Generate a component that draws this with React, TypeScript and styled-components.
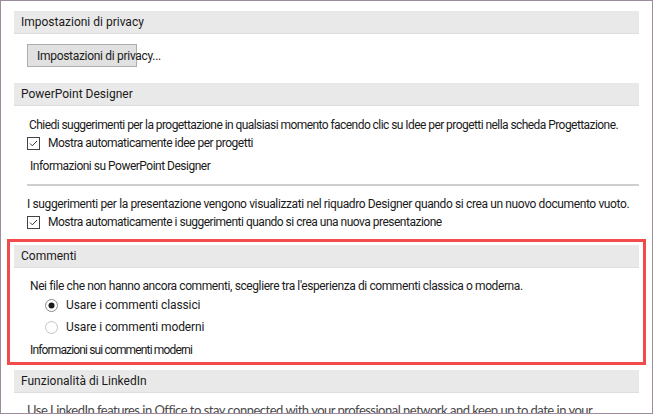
import React from 'react';
import styled, { createGlobalStyle } from 'styled-components';

const GlobalStyle = createGlobalStyle`
  html, body {
    margin: 0;
    padding: 0;
    background: #ffffff;
  }
  body {
    font-family: Roboto, "Liberation Sans", Arial, sans-serif;
    font-size: 12px;
    color: #1a1a1a;
  }
`;

const Frame = styled.div`
  width: 653px;
  height: 414px;
  box-sizing: border-box;
  border: 1px solid #9f8b9f;
  padding: 10px 13px 0 13px;
  overflow: hidden;
  display: flex;
  flex-direction: column;
`;

const SectionHeader = styled.div<{ $gap?: number }>`
  height: 22px;
  margin-top: ${({ $gap }) => ($gap ? `${$gap}px` : '0')};
  border-bottom: 1px solid #dedede;
  background: #e9e9e9;
  padding-left: 7px;
  display: flex;
  align-items: center;
  flex-shrink: 0;
`;

const PlainButton = styled.button`
  width: 110px;
  height: 23px;
  margin: 10px 0 0 13px;
  padding: 0 0 0 9px;
  box-sizing: border-box;
  border: 1px solid #adadad;
  background: #e1e1e1;
  font: inherit;
  letter-spacing: -0.3px;
  color: #1a1a1a;
  text-align: left;
  white-space: nowrap;
  overflow: visible;
  flex-shrink: 0;
`;

const TextRow = styled.div<{ $gap?: number; $indent?: number; $height?: number; $track?: number }>`
  height: ${({ $height }) => ($height ? `${$height}px` : '18px')};
  margin-top: ${({ $gap }) => ($gap ? `${$gap}px` : '0')};
  padding-left: ${({ $indent }) => ($indent ? `${$indent}px` : '15px')};
  letter-spacing: ${({ $track }) => ($track !== undefined ? $track : -0.5)}px;
  display: flex;
  align-items: center;
  white-space: nowrap;
  flex-shrink: 0;
`;

const OptionRow = styled.label<{ $indent: number; $height?: number; $track?: number }>`
  height: ${({ $height }) => ($height ? `${$height}px` : '18px')};
  padding-left: ${({ $indent }) => $indent}px;
  letter-spacing: ${({ $track }) => ($track !== undefined ? $track : -0.5)}px;
  display: flex;
  align-items: center;
  gap: 8px;
  white-space: nowrap;
  flex-shrink: 0;
`;

const Separator = styled.div`
  height: 2px;
  margin: 9px 0 0 13px;
  background: #cfcfcf;
  flex-shrink: 0;
`;

const Highlight = styled.div`
  margin: 8px -7px 0 -7px;
  border: 3px solid #f24a4d;
  padding: 3px 4px;
  display: flex;
  flex-direction: column;
  flex-shrink: 0;
`;

const FooterText = styled.div`
  margin-top: 8px;
  padding-left: 13px;
  height: 18px;
  display: flex;
  align-items: center;
  white-space: nowrap;
  font-family: Lato, "Liberation Sans", sans-serif;
  font-size: 13px;
  letter-spacing: -0.5px;
  color: #4a4a4a;
  flex-shrink: 0;
`;

const CheckBox = () => (
  <svg width="13" height="13" viewBox="0 0 13 13">
    <rect x="0.5" y="0.5" width="12" height="12" fill="#fff" stroke="#444" />
    <path d="M3 6.5 L5.3 8.8 L10 4" fill="none" stroke="#333" strokeWidth="1" />
  </svg>
);

const Radio = ({ checked }: { checked?: boolean }) => (
  <svg width="13" height="13" viewBox="0 0 13 13">
    <circle cx="6.5" cy="6.5" r="6" fill="#fff" stroke={checked ? '#888' : '#c4c4c4'} />
    {checked && <circle cx="6.5" cy="6.5" r="3" fill="#1a1a1a" />}
  </svg>
);

export default function App() {
  return (
    <>
      <GlobalStyle />
      <Frame>
        <SectionHeader>Impostazioni di privacy</SectionHeader>
        <PlainButton type="button">Impostazioni di privacy...</PlainButton>

        <SectionHeader $gap={16}>PowerPoint Designer</SectionHeader>
        <TextRow $gap={10} $track={-0.56}>
          Chiedi suggerimenti per la progettazione in qualsiasi momento facendo clic su Idee per progetti nella scheda Progettazione.
        </TextRow>
        <OptionRow $indent={13}>
          <CheckBox />
          Mostra automaticamente idee per progetti
        </OptionRow>
        <TextRow $gap={5} $indent={16} $track={-0.5}>Informazioni su PowerPoint Designer</TextRow>
        <Separator />
        <TextRow $gap={9} $indent={13} $track={-0.38}>
          I suggerimenti per la presentazione vengono visualizzati nel riquadro Designer quando si crea un nuovo documento vuoto.
        </TextRow>
        <OptionRow $indent={13}>
          <CheckBox />
          Mostra automaticamente i suggerimenti quando si crea una nuova presentazione
        </OptionRow>

        <Highlight>
          <SectionHeader>Commenti</SectionHeader>
          <TextRow $gap={10} $indent={16} $height={16} $track={-0.4}>
            Nei file che non hanno ancora commenti, scegliere tra l'esperienza di commenti classica o moderna.
          </TextRow>
          <OptionRow $indent={31} $height={22} $track={-0.1}>
            <Radio checked />
            Usare i commenti classici
          </OptionRow>
          <OptionRow $indent={31} $height={22} $track={-0.1}>
            <Radio />
            Usare i commenti moderni
          </OptionRow>
          <TextRow $gap={3} $indent={16} $track={-0.85}>Informazioni sui commenti moderni</TextRow>
        </Highlight>

        <SectionHeader $gap={5}>Funzionalità di LinkedIn</SectionHeader>
        <FooterText>
          Use LinkedIn features in Office to stay connected with your professional network and keep up to date in your
        </FooterText>
      </Frame>
    </>
  );
}
